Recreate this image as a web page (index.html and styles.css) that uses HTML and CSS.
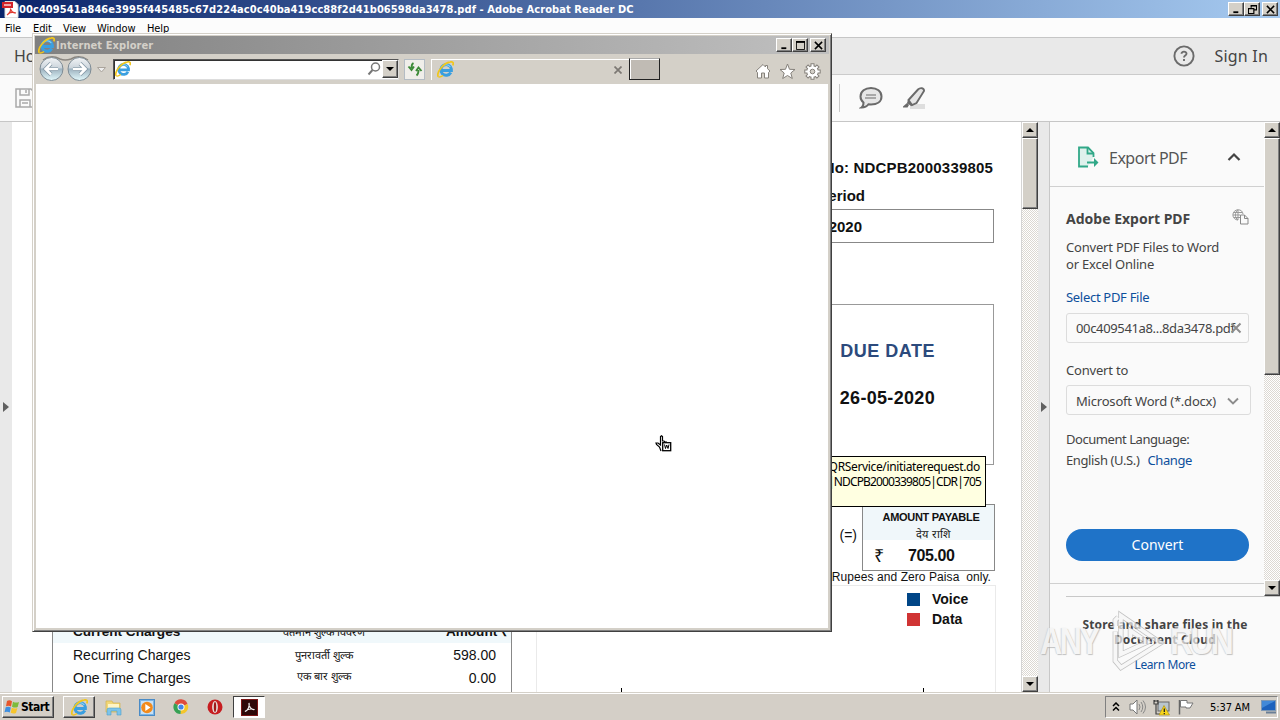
FILE: index.html
```html
<!DOCTYPE html>
<html lang="en">
<head>
    <meta charset="UTF-8">
    <meta name="viewport" content="width=device-width, initial-scale=1.0">
    <title>Adobe Acrobat Reader DC</title>
    <link rel="stylesheet" href="styles.css">
</head>
<body>
    <svg class="defs">
        <symbol id="ie" viewBox="0 0 16 16">
            <path d="M13 10.8A5 5 0 1 1 13.500 7.500L13.500 8.900H4.600" fill="none" stroke="#3a9fe0" stroke-width="2.800"/>
            <path d="M12.600 5.600A5.200 5.200 0 0 0 4 6" fill="none" stroke="#8fd3f6" stroke-width="1"/>
            <path d="M1.200 14.800C-1 11 6 2 12.500 .9C15.500 .3 15.700 2.300 14.800 4.200" fill="none" stroke="#f1c61c" stroke-width="1.600"/>
            <path d="M1.200 14.800C2.500 15.600 4.500 14.500 5.700 13.600" fill="none" stroke="#f1c61c" stroke-width="1.300"/>
        </symbol>
        <symbol id="min" viewBox="0 0 10 10"><path d="M1.500 8H7" stroke="#000" stroke-width="2"/></symbol>
        <symbol id="max" viewBox="0 0 10 10"><path d="M.5 1H9.500M.5 0V9.500H9.500V0" fill="none" stroke="#000"/><path d="M0 1H10" stroke="#000" stroke-width="2"/></symbol>
        <symbol id="restore" viewBox="0 0 10 10"><path d="M3.500 3V.5H9.500V5.500H7M3 1H10M.5 4V9.500H6.500V4M0 4H7" fill="none" stroke="#000" stroke-width="1.300"/></symbol>
        <symbol id="close" viewBox="0 0 10 10"><path d="M1 1L9 9M9 1L1 9" stroke="#000" stroke-width="1.700"/></symbol>
    </svg>

    <div class="titlebar">
        <svg class="pdf-icon" width="17" height="17" viewBox="0 0 17 17">
            <path d="M3 .5H13L16 3.500V16.500H3Z" fill="#fff" stroke="#ddd"/>
            <rect x="0" y="1" width="11" height="6" fill="#d3222a"/>
            <path d="M2 4H9" stroke="#fff" stroke-width="1.200"/>
            <path d="M5 14C8 12 9 10 8.500 7.500M8.500 8C9.500 11 11 12 14 12M6 13C8 11.500 11 11 14 12" fill="none" stroke="#e0392f" stroke-width="1.200"/>
        </svg>
        <span class="title-text">00c409541a846e3995f445485c67d224ac0c40ba419cc88f2d41b06598da3478.pdf - Adobe Acrobat Reader DC</span>
        <div class="win-buttons">
            <span class="wb"><svg><use href="#min"/></svg></span>
            <span class="wb"><svg><use href="#restore"/></svg></span>
            <span class="wb last"><svg><use href="#close"/></svg></span>
        </div>
    </div>
    <div class="menubar">
        <span class="m-file">File</span><span class="m-edit">Edit</span><span class="m-view">View</span><span class="m-window">Window</span><span>Help</span>
    </div>
    <div class="header">
        <span class="home">Home</span>
        <svg width="22" height="22" viewBox="0 0 22 22">
            <circle cx="11" cy="11" r="9.600" fill="none" stroke="#6b6b6b" stroke-width="1.900"/>
            <path d="M8.500 8.800C8.500 5.800 13.600 6 13.500 8.800C13.400 10.700 11 10.500 11 12.500M11 14V16" fill="none" stroke="#6b6b6b" stroke-width="1.900"/>
        </svg>
        <span class="signin">Sign In</span>
    </div>
    <div class="toolbar">
        <svg class="save" width="20" height="20" viewBox="0 0 20 20">
            <path d="M1 1H16L19 4V19H1Z M5 1V7H14V1 M11 2V5 M5 19V12H15V19 M7 15H13" fill="none" stroke="#a9a9a9" stroke-width="1.500"/>
        </svg>
        <span class="sep"></span>
        <svg class="comment" width="24" height="22" viewBox="0 0 24 22">
            <path d="M12 1C18 1 22.500 4.300 22.500 9.500S18 17.500 12 17.500L9.500 17.300C8 19.500 5 20.500 2.500 20.500C4 19.500 4.500 17.500 4.500 15.500C2.500 14 1.500 12 1.500 9.500C1.500 4.300 6 1 12 1Z" fill="#e6e6e6" stroke="#6a6a6a" stroke-width="2"/>
            <path d="M7 8H17M6 11H17" stroke="#6a6a6a" stroke-width="1.200"/>
        </svg>
        <svg width="24" height="22" viewBox="0 0 24 22">
            <rect x="8" y="17" width="15" height="5" fill="#dedede"/>
            <path d="M6.500 13L16 2.500C18 .5 22.500 .5 22 4L14.500 16L10 18Z" fill="#e6e6e6" stroke="#6a6a6a" stroke-width="1.900"/>
            <path d="M6 13L11 18L9 19L5 16ZM1 19.500L5 16L7 18L5.500 20.500H1Z" fill="#6a6a6a"/>
        </svg>
    </div>

    <div class="main">
        <div class="nav-strip"><span class="arrow"></span></div>
        <div class="document">
            <div class="bill-no">Bill No: NDCPB2000339805</div>
            <div class="period">Billing Period</div>
            <div class="period-box">2020</div>
            <div class="due-box">
                <div class="due-label">DUE DATE</div>
                <div class="due-date">26-05-2020</div>
            </div>
            <div class="payable-row">
                <span class="equals">(=)</span>
                <div class="payable">
                    <div class="payable-head">
                        <div class="payable-title">AMOUNT PAYABLE</div>
                        <div class="hindi">देय राशि</div>
                    </div>
                    <div class="payable-value"><span class="rupee">₹</span><span>705.00</span></div>
                </div>
            </div>
            <div class="words">Rupees and Zero Paisa &nbsp;only.</div>
            <div class="bottom-row">
                <div class="charges">
                    <div class="charge charge-head"><span>Current Charges</span><span class="hindi">वर्तमान शुल्क विवरण</span><span class="amount">Amount ₹</span></div>
                    <div class="charge"><span>Recurring Charges</span><span class="hindi">पुनरावर्ती शुल्क</span><span class="amount">598.00</span></div>
                    <div class="charge"><span>One Time Charges</span><span class="hindi up">एक बार शुल्क</span><span class="amount">0.00</span></div>
                </div>
                <div class="chart">
                    <div class="legend"><span class="swatch voice"></span>Voice</div>
                    <div class="legend"><span class="swatch data"></span>Data</div>
                    <div class="ticks"><span></span><span></span></div>
                </div>
            </div>
        </div>
        <div class="scrollbar">
            <span class="sb-btn"><i class="up-arrow"></i></span>
            <span class="thumb doc-thumb"></span>
            <span class="sb-btn sb-end"><i class="down-arrow"></i></span>
        </div>
        <div class="splitter"><span class="arrow"></span></div>
        <div class="side">
            <div class="side-top">
                <div class="panel">
                    <div class="panel-head">
                        <svg width="22" height="22" viewBox="0 0 22 22">
                            <path d="M11 20.500H2V1.500H11L16.500 7V11" fill="#dff1ec" stroke="#31a888" stroke-width="1.800"/>
                            <path d="M10.500 1.500V7.500H16.500" fill="none" stroke="#31a888" stroke-width="1.800"/>
                            <path d="M10 15.500H17V12L21.500 16.500L17 21V17.500H10Z" fill="#31a888"/>
                        </svg>
                        <span>Export PDF</span>
                        <svg class="chev" width="14" height="10" viewBox="0 0 14 10"><path d="M1.500 8L7 2.500L12.500 8" fill="none" stroke="#444" stroke-width="2.200"/></svg>
                    </div>
                    <div class="panel-body">
                        <div class="panel-title">
                            <span>Adobe Export PDF</span>
                            <svg width="17" height="16" viewBox="0 0 17 16">
                                <path d="M6 .8A5 5 0 1 0 6 11M6 .8A5 5 0 0 1 11 5M6 .8V11M1 6H8M1.500 3.500H10M2 8.500H8M6 .8C2.500 3 2.500 9 6 11" fill="none" stroke="#999"/>
                                <path d="M8.500 6H12.500L16 9.500V15H8.500ZM12.500 6V9.500H16" fill="#fafafa" stroke="#888"/>
                            </svg>
                        </div>
                        <div class="desc">Convert PDF Files to Word<br>or Excel Online</div>
                        <div class="link select-file">Select PDF File</div>
                        <div class="field file"><span>00c409541a8...8da3478.pdf</span>
                            <svg width="12" height="12" viewBox="0 0 12 12"><path d="M1.500 1.500L10.500 10.500M10.500 1.500L1.500 10.500" stroke="#8c8c8c" stroke-width="2"/></svg>
                        </div>
                        <div class="convert-to">Convert to</div>
                        <div class="field format"><span>Microsoft Word (*.docx)</span>
                            <svg width="12" height="8" viewBox="0 0 12 8"><path d="M1 1.500L6 6.500L11 1.500" fill="none" stroke="#8c8c8c" stroke-width="1.900"/></svg>
                        </div>
                        <div class="doc-lang">Document Language:</div>
                        <div class="lang"><span>English (U.S.)</span><span class="link change">Change</span></div>
                        <div class="convert-btn">Convert</div>
                    </div>
                    <div class="panel-end"></div>
                </div>
                <div class="scrollbar side-bar">
                    <span class="sb-btn"><i class="up-arrow"></i></span>
                    <span class="thumb side-thumb"></span>
                    <span class="sb-btn sb-end"><i class="down-arrow"></i></span>
                </div>
            </div>
            <div class="cloud">
                <div class="store">Store and share files in the<br>Document Cloud</div>
                <div class="link learn">Learn More</div>
            </div>
        </div>
    </div>

    <div class="taskbar">
        <div class="start">
            <svg width="16" height="16" viewBox="0 0 16 16">
                <path d="M3 2Q5.500 .5 8 2.300L7 7.500Q4.500 6 2 7.300Z" fill="#e8562a"/>
                <path d="M9 2.700Q12 4.300 15 3L13.700 8Q11 9.300 8 7.700Z" fill="#7dbb3c"/>
                <path d="M1.700 8.300Q4.300 7 6.800 8.500L5.800 13.500Q3 12 .5 13.300Z" fill="#3f8fe0"/>
                <path d="M7.800 8.800Q10.500 10.300 13.400 9L12 14Q9.500 15.300 6.700 13.800Z" fill="#f7c52c"/>
            </svg>
            <span>Start</span>
        </div>
        <div class="task raised"><svg width="17" height="17"><use href="#ie"/></svg></div>
        <div class="task">
            <svg width="17" height="17" viewBox="0 0 17 17">
                <path d="M1 2H7L8 4H15V13H1Z" fill="#f1d778" stroke="#d3b24d" stroke-width=".7"/>
                <path d="M3 5H14V9H3Z" fill="#fff5c5"/>
                <path d="M2 16V11Q2 9 4 9H14Q16 9 16 11V16H12V12H6V16Z" fill="#7cc4ea" stroke="#4d9fca" stroke-width=".6"/>
            </svg>
        </div>
        <div class="task">
            <svg width="17" height="17" viewBox="0 0 17 17">
                <rect x=".5" y=".5" width="15" height="16" fill="#79b4e6" stroke="#4a8bc6"/>
                <rect x="2" y="2" width="12" height="13" fill="#c9e1f4"/>
                <circle cx="8" cy="8.500" r="5.800" fill="#f28a1b"/><path d="M6.300 5L11.500 8.500L6.300 12Z" fill="#fff"/>
            </svg>
        </div>
        <div class="task">
            <svg width="16" height="16" viewBox="0 0 16 16">
                <path d="M8 8L1.500 4.300A7 7 0 0 1 14.500 5Z" fill="#de4b3c"/>
                <path d="M8 8L14.500 5A7 7 0 0 1 7.500 15Z" fill="#f4c62b"/>
                <path d="M8 8L7.500 15A7 7 0 0 1 1.500 4.300Z" fill="#36a154"/>
                <circle cx="8" cy="8" r="3.500" fill="#fff"/><circle cx="8" cy="8" r="2.600" fill="#4285e8"/>
            </svg>
        </div>
        <div class="task">
            <svg width="16" height="16" viewBox="0 0 16 16"><circle cx="8" cy="8" r="7.500" fill="#c71d20"/><ellipse cx="8" cy="8" rx="2.900" ry="5.900" fill="#e6dcd8"/><ellipse cx="8" cy="8" rx="1.200" ry="5" fill="#a01818"/></svg>
        </div>
        <div class="task pressed">
            <svg width="17" height="17" viewBox="0 0 17 17"><rect width="17" height="17" fill="#2e0808"/><rect x=".5" y=".5" width="16" height="16" fill="none" stroke="#7b1515"/><path d="M4 12.500C7 11.500 9 7 8 4C7.500 7 10 11 13.500 10.500C10 9.500 6 10.500 4 12.500Z" fill="none" stroke="#eee" stroke-width="1.200"/></svg>
        </div>
        <div class="tray">
            <svg width="8" height="10" viewBox="0 0 8 10"><path d="M1 4L4 1L7 4M1 8.500L4 5.500L7 8.500" fill="none" stroke="#000" stroke-width="1.500"/></svg>
            <svg class="speaker" width="18" height="16" viewBox="0 0 18 16"><path d="M1 5H4L8 1V15L4 11H1Z" fill="#fff" stroke="#777"/><path d="M10 5Q12 8 10 11M12 3Q15.500 8 12 13M14 1.500Q19 8 14 14.500" fill="none" stroke="#888"/></svg>
            <svg class="net" width="17" height="17" viewBox="0 0 17 17"><rect x="5" y="3" width="11" height="9" fill="#b9c5ce" stroke="#666"/><path d="M1 1V5H5V1M3 5V15H8M2 1V3M4 1V3" fill="none" stroke="#444" stroke-width="1.200"/><path d="M11 6.500L16.500 16H6Z" fill="#f8d51a" stroke="#a68a0c" stroke-width=".6"/><path d="M11.300 9.500V13M11.300 14V15.200" stroke="#222" stroke-width="1.300"/></svg>
            <svg class="flag" width="16" height="16" viewBox="0 0 16 16"><path d="M1.500 1V15.500" stroke="#666" stroke-width="1.500"/><path d="M2.500 1.500H9V4H15L12 9H8V8H2.500Z" fill="#fff" stroke="#777"/></svg>
            <span class="clock">5:37 AM</span>
            <svg width="16" height="14" viewBox="0 0 16 14"><rect x=".5" y=".5" width="14" height="10" fill="#1d62bd" stroke="#7d98b5"/><path d="M1 1H14L1 8Z" fill="#4289d8"/><path d="M5 12.500H15" stroke="#6a7f96" stroke-width="2"/></svg>
        </div>
    </div>

    <div class="tooltip">
        <div class="tip-url">QRService/initiaterequest.do</div>
        <div class="tip-ref">|NDCPB2000339805|CDR|705</div>
    </div>

    <div class="ie-window">
        <div class="ie-title">
            <svg width="17" height="17"><use href="#ie"/></svg>
            <span>Internet Explorer</span>
            <div class="win-buttons">
                <span class="wb"><svg><use href="#min"/></svg></span>
                <span class="wb"><svg><use href="#max"/></svg></span>
                <span class="wb last"><svg><use href="#close"/></svg></span>
            </div>
        </div>
        <div class="ie-bar">
            <svg class="nav" width="70" height="28" viewBox="0 0 70 28">
                <defs><linearGradient id="ball" x2="0" y2="1"><stop offset="0" stop-color="#f2f4f6"/><stop offset=".45" stop-color="#ccd5dc"/><stop offset=".5" stop-color="#9db2bf"/><stop offset="1" stop-color="#e4fafd"/></linearGradient></defs>
                <path d="M6 5Q14-1 23 4Q28 6 34 4Q42-1 51 5" fill="none" stroke="#8a8680" stroke-width="1.500"/>
                <circle cx="14.500" cy="14" r="11.500" fill="url(#ball)" stroke="#7e8b94"/>
                <circle cx="42.500" cy="14" r="11.500" fill="url(#ball)" stroke="#7e8b94"/>
                <path d="M21 14H9M14 8.500L8.500 14L14 19.500" fill="none" stroke="#8296a5" stroke-width="4"/>
                <path d="M21 14H9M14 8.500L8.500 14L14 19.500" fill="none" stroke="#fff" stroke-width="2.500"/>
                <path d="M36 14H48M43 8.500L48.500 14L43 19.500" fill="none" stroke="#8296a5" stroke-width="4"/>
                <path d="M36 14H48M43 8.500L48.500 14L43 19.500" fill="none" stroke="#fff" stroke-width="2.500"/>
                <path d="M60.500 12.500H68.500L64.500 17Z" fill="#eee" stroke="#aaa49c"/>
            </svg>
            <div class="address">
                <svg width="16" height="16"><use href="#ie"/></svg>
                <svg class="search" width="14" height="14" viewBox="0 0 14 14"><circle cx="8.500" cy="5" r="4" fill="none" stroke="#777" stroke-width="1.500"/><path d="M5.500 8L1.500 12.500" stroke="#777" stroke-width="2"/></svg>
                <span class="drop"><i class="down-arrow"></i></span>
            </div>
            <div class="refresh">
                <svg width="16" height="16" viewBox="0 0 16 16"><path d="M6.500 2Q4.500 3 4.500 7M1.500 5.500L4.500 9L7 5.500M9.500 14.500Q11.500 13 11.500 9M9 10L11.500 6.500L14.500 10" fill="none" stroke="#3c8a38" stroke-width="1.900"/></svg>
            </div>
            <div class="tab">
                <svg width="17" height="17"><use href="#ie"/></svg>
                <svg width="8" height="8" viewBox="0 0 8 8"><path d="M.5 .5L7.500 7.500M7.500 .5L.5 7.500" stroke="#7c7873" stroke-width="1.700"/></svg>
            </div>
            <div class="new-tab"></div>
            <div class="ie-tools">
                <svg width="16" height="16" viewBox="0 0 16 16"><path d="M1 8L8 1.500L10.500 4V2.500H12.500V5.700L15 8L13.500 9.500V15H9.500V10H6.500V15H2.500V9.500Z" fill="#fff" stroke="#85817b"/></svg>
                <svg width="17" height="17" viewBox="0 0 17 17"><path d="M8.500 1L10.500 6.300L16 6.500L11.800 10L13.300 15.500L8.500 12.500L3.700 15.500L5.200 10L1 6.500L6.500 6.300Z" fill="#fff" stroke="#85817b"/></svg>
                <svg width="17" height="17" viewBox="0 0 17 17">
                    <path d="M8.500 .3V16.700M.3 8.500H16.700M2.700 2.700L14.300 14.300M14.300 2.700L2.700 14.300" stroke="#85817b" stroke-width="4"/>
                    <circle cx="8.500" cy="8.500" r="6.300" fill="#85817b"/>
                    <path d="M8.500 1.300V15.700M1.300 8.500H15.700M3.400 3.400L13.600 13.600M13.600 3.400L3.400 13.600" stroke="#fff" stroke-width="2"/>
                    <circle cx="8.500" cy="8.500" r="5.300" fill="#fff"/>
                    <circle cx="8.500" cy="8.500" r="2.300" fill="#d4d0c8" stroke="#85817b"/>
                </svg>
            </div>
        </div>
        <div class="ie-page"></div>
    </div>

    <svg class="cursor" width="18" height="18" viewBox="0 0 18 18">
        <path d="M6 16L4.500 12L1.500 9.500L1 8H3L5.500 10V1.500L6.500 .8L7.500 1.500V6H9L10 7H12" fill="#fff" stroke="#000" stroke-width="1.200"/>
        <rect x="7.700" y="7.700" width="8" height="8" fill="#fff" stroke="#000" stroke-width="1.300"/>
        <path d="M9.500 9.500L10.500 13.500L11.700 10L13 13.500L14 9.500" fill="none" stroke="#000"/>
    </svg>

    <div class="watermark">
        <span>ANY</span>
        <svg width="70" height="66" viewBox="0 0 74 66"><path d="M14 16V10L17 7M14 22V53L20 60L62 34L20 5V46L48 33L30 21V28" fill="none" stroke="#aaa" stroke-width="5.500"/><path d="M14 16V10L17 7M14 22V53L20 60L62 34L20 5V46L48 33L30 21V28" fill="none" stroke="#f6f6f6" stroke-width="4"/></svg>
        <span class="run">RUN</span>
    </div>
</body>
</html>
```
FILE: styles.css
```css
* {
    box-sizing: border-box;
}
body {
    margin: 0;
    width: 1280px;
    height: 720px;
    overflow: hidden;
    display: flex;
    flex-direction: column;
    font-family: "Noto Sans", sans-serif;
    background: #fff;
    position: relative;
    white-space: nowrap;
}
svg {
    display: block;
    flex: none;
}
.defs {
    position: absolute;
    width: 0;
    height: 0;
}

/* window chrome */
.titlebar {
    height: 18px;
    flex: none;
    display: flex;
    align-items: center;
    padding: 0 2px;
    background: linear-gradient(90deg, #0a246a, #a6caf0);
    color: #fff;
}
.title-text {
    font: bold 11px "DejaVu Sans Condensed", "DejaVu Sans", sans-serif;
    letter-spacing: 0.08px;
}
.win-buttons {
    display: flex;
    margin-left: auto;
}
.wb {
    width: 16px;
    height: 14px;
    display: flex;
    align-items: center;
    justify-content: center;
    background: #d4d0c8;
    border: 1px solid;
    border-color: #fff #404040 #404040 #fff;
    box-shadow: inset -1px -1px #808080;
}
.wb svg {
    width: 9px;
    height: 9px;
}
.wb.last {
    margin-left: 2px;
}
.menubar {
    height: 19px;
    flex: none;
    display: flex;
    align-items: center;
    padding: 1px 0 0 5px;
    font: 11px "DejaVu Sans Condensed", "DejaVu Sans", sans-serif;
    letter-spacing: -0.1px;
    color: #000;
    background: #fcfcfc;
}
.m-file {
    width: 28px;
}
.m-edit {
    width: 30px;
}
.m-view {
    width: 34px;
}
.m-window {
    width: 50px;
}
.header {
    height: 38px;
    flex: none;
    display: flex;
    align-items: center;
    padding: 0 12px 0 14px;
    background: #e9e9e9;
    border-top: 1px solid #c6c6c6;
    border-bottom: 1px solid #cbcbcb;
    font-size: 16px;
    color: #444;
}
.header svg {
    margin-left: auto;
}
.signin {
    margin-left: 19px;
    letter-spacing: 0.2px;
}
.toolbar {
    height: 47px;
    flex: none;
    display: flex;
    align-items: center;
    padding-left: 15px;
    background: #fafafa;
    border-bottom: 1px solid #c6c6c6;
}
.sep {
    width: 1px;
    height: 28px;
    margin-left: 804px;
    background: #c8c8c8;
}
.comment {
    margin: 0 19px;
}

/* main area */
.main {
    height: 570px;
    flex: none;
    display: flex;
}
.nav-strip,
.splitter {
    width: 12px;
    display: flex;
    align-items: center;
    padding-left: 3px;
    background: #e9e9e9;
}
.splitter {
    border-right: 1px solid #c8c8c8;
}
.arrow {
    border: 5px solid transparent;
    border-left: 6px solid #606060;
    border-right: 0;
}
.document {
    width: 1009px;
    display: flex;
    flex-direction: column;
    overflow: hidden;
    font-family: "Liberation Sans", Arial, sans-serif;
    color: #111;
}
.bill-no {
    margin: 36px 28px 0 0;
    text-align: right;
    font-size: 15px;
    font-weight: bold;
    line-height: 20px;
    letter-spacing: 0.18px;
}
.period {
    margin: 8px 156px 0 0;
    text-align: right;
    font-size: 15px;
    font-weight: bold;
    line-height: 20px;
}
.period-box {
    width: 300px;
    height: 34px;
    margin: 3px 27px 0 auto;
    padding-right: 131px;
    border: 1px solid #888;
    text-align: right;
    font-size: 15px;
    font-weight: bold;
    line-height: 34px;
}
.due-box {
    width: 300px;
    height: 161px;
    margin: 61px 27px 0 auto;
    padding: 33px 58px 0 0;
    border: 1px solid #999;
    text-align: right;
    font-size: 18px;
    font-weight: bold;
    line-height: 27px;
}
.due-label {
    color: #2c4a7c;
    letter-spacing: 0.5px;
}
.due-date {
    margin-top: 20px;
    letter-spacing: 0.32px;
}
.payable-row {
    height: 67px;
    margin: 39px 26px 0 0;
    display: flex;
    justify-content: flex-end;
}
.equals {
    margin-right: 5px;
    font-size: 14px;
    line-height: 62px;
}
.payable {
    width: 133px;
    border: 1px solid #888;
}
.payable-head {
    height: 35px;
    padding: 5px 0 0 5px;
    background: #f0f7fa;
    text-align: center;
}
.payable-title {
    font-size: 11px;
    font-weight: bold;
    line-height: 15px;
    letter-spacing: -0.3px;
}
.hindi {
    font-size: 11px;
    line-height: 15px;
}
.payable-head .hindi {
    padding: 2px 0 0 4px;
}
.payable-value {
    display: flex;
    padding-left: 11px;
    font-size: 16px;
    font-weight: bold;
    line-height: 32px;
    letter-spacing: -0.4px;
}
.rupee {
    width: 34px;
    font-size: 18px;
    font-weight: normal;
}
.words {
    margin: 0 30px 0 0;
    text-align: right;
    font-size: 12px;
    line-height: 12px;
    letter-spacing: 0.07px;
}
.bottom-row {
    flex: 1;
    display: flex;
    align-items: stretch;
    margin-top: 2px;
    padding-left: 40px;
}
.charges {
    width: 460px;
    padding-top: 35px;
    border-left: 1px solid #888;
    border-right: 1px solid #888;
}
.charge {
    height: 23px;
    display: grid;
    grid-template-columns: 159px 184px 80px;
    padding-left: 20px;
    font-size: 14px;
    line-height: 25px;
}
.charge .hindi {
    text-align: center;
    line-height: 25px;
}
.charge .hindi.up {
    line-height: 21px;
}
.charge .amount {
    text-align: right;
}
.charge-head {
    background: #f0f8fb;
    font-weight: bold;
    font-size: 13.6px;
    line-height: 23px;
    grid-template-columns: 159px 184px 93px;
}
.charge-head .hindi {
    font-weight: normal;
}
.chart {
    width: 460px;
    margin-left: 24px;
    padding-top: 3px;
    border: 1px solid #eaeaea;
    border-bottom: 0;
    display: flex;
    flex-direction: column;
}
.legend {
    height: 20px;
    display: flex;
    align-items: center;
    padding-left: 370px;
    font-size: 14px;
    font-weight: bold;
}
.swatch {
    width: 13px;
    height: 13px;
    margin-right: 12px;
}
.voice {
    background: #004586;
}
.data {
    background: #d03434;
}
.ticks {
    margin-top: auto;
    padding: 0 71px 0 84px;
    display: flex;
    justify-content: space-between;
}
.ticks span {
    width: 1px;
    height: 4px;
    background: #000;
}

/* scrollbars */
.scrollbar {
    width: 17px;
    display: flex;
    flex-direction: column;
    background: repeating-conic-gradient(#fff 0 25%, #dcd8d2 0 50%) 0 0 / 2px 2px;
    border-left: 1px solid #d4d4d4;
}
.sb-btn,
.drop {
    width: 16px;
    height: 16px;
    display: flex;
    align-items: center;
    justify-content: center;
    background: #d4d0c8;
    border: 1px solid;
    border-color: #fff #404040 #404040 #fff;
    box-shadow: inset -1px -1px #808080;
}
.sb-end {
    margin-top: auto;
}
.thumb {
    background: #d4d0c8;
    border: 1px solid;
    border-color: #fff #404040 #404040 #fff;
    box-shadow: inset -1px -1px #808080;
}
.doc-thumb {
    height: 71px;
}
.side-thumb {
    height: 237px;
}
.up-arrow {
    border: 4px solid transparent;
    border-top: 0;
    border-bottom-color: #000;
}
.down-arrow {
    border: 4px solid transparent;
    border-bottom: 0;
    border-top-color: #000;
}

/* export panel */
.side {
    width: 230px;
    background: #fafafa;
    color: #444;
    font-size: 13px;
    letter-spacing: -0.2px;
}
.side-top {
    height: 474px;
    display: flex;
}
.panel {
    width: 214px;
}
.side-bar {
    width: 16px;
    border-left: 0;
}
.panel-head {
    height: 65px;
    display: flex;
    align-items: center;
    padding: 6px 23px 0 27px;
    border-bottom: 1px solid #d0d0d0;
    font-size: 16px;
    color: #555;
}
.panel-head span {
    margin-left: 10px;
    padding-top: 1px;
    letter-spacing: -0.7px;
    letter-spacing: -0.5px;
}
.chev {
    margin-left: auto;
}
.panel-body {
    padding: 22px 13px 0 16px;
}
.panel-title {
    height: 20px;
    display: flex;
    justify-content: space-between;
    padding-right: 2px;
    font-size: 14px;
    font-weight: bold;
    line-height: 20px;
    letter-spacing: 0;
}
.desc {
    margin-top: 10px;
    line-height: 17px;
}
.link {
    color: #0d4f9c;
}
.select-file {
    margin-top: 15px;
    line-height: 18px;
    letter-spacing: -0.3px;
}
.field {
    height: 30px;
    display: flex;
    align-items: center;
    justify-content: space-between;
    border: 1px solid #dcdcdc;
    border-radius: 3px;
    margin-top: 6px;
    padding: 0 11px 0 9px;
}
.file {
    width: 183px;
    margin-top: 7px;
    padding-right: 6px;
    letter-spacing: -0.35px;
}
.file svg {
    margin-left: -8px;
}
.format {
    width: 185px;
    padding-top: 2px;
}
.convert-to {
    margin-top: 18px;
    line-height: 18px;
}
.doc-lang {
    margin-top: 15px;
    line-height: 18px;
    letter-spacing: -0.45px;
}
.lang {
    margin-top: 3px;
    line-height: 18px;
    letter-spacing: -0.38px;
}
.change {
    margin-left: 8px;
}
.convert-btn {
    width: 183px;
    height: 32px;
    margin-top: 60px;
    border-radius: 16px;
    background: #1f73c8;
    color: #fff;
    font-size: 14px;
    line-height: 31px;
    text-align: center;
    letter-spacing: 0;
}
.panel-end {
    height: 13px;
    margin-top: 22px;
    border-top: 1px solid #d0d0d0;
}
.cloud {
    margin-left: 16px;
    padding: 20px 16px 0 0;
    border-top: 1px solid #c8c8c8;
    text-align: center;
}
.store {
    font-size: 12px;
    font-weight: bold;
    line-height: 15px;
    letter-spacing: 0.2px;
}
.learn {
    margin-top: 9px;
    font-size: 12px;
    line-height: 18px;
    letter-spacing: -0.4px;
}

/* taskbar */
.taskbar {
    height: 28px;
    flex: none;
    display: flex;
    align-items: center;
    padding: 1px 2px 0;
    background: #d4cfc7;
    border-top: 1px solid #d4d0c8;
    box-shadow: inset 0 1px #fff;
}
.start {
    width: 52px;
    height: 22px;
    display: flex;
    align-items: center;
    gap: 1px;
    padding-left: 1px;
    margin-right: 9px;
    border: 1px solid;
    border-color: #fff #404040 #404040 #fff;
    box-shadow: inset -1px -1px #808080;
    font: bold 12px "DejaVu Sans Condensed", "DejaVu Sans", sans-serif;
    letter-spacing: -0.5px;
}
.task {
    width: 32px;
    height: 22px;
    margin-right: 2px;
    display: flex;
    align-items: center;
    justify-content: center;
}
.raised {
    border: 1px solid;
    border-color: #fff #404040 #404040 #fff;
    box-shadow: inset -1px -1px #808080;
}
.pressed {
    background: #fff;
    border: 1px solid;
    border-color: #404040 #fff #fff #404040;
}
.tray {
    width: 173px;
    height: 22px;
    margin-left: auto;
    display: flex;
    align-items: center;
    padding-left: 6px;
    border: 1px solid;
    border-color: #808080 #fff #fff #808080;
    font: 11px "DejaVu Sans Condensed", "DejaVu Sans", sans-serif;
}
.speaker {
    margin-left: 9px;
}
.net {
    margin-left: 6px;
}
.flag {
    margin-left: 8px;
}
.clock {
    width: 51px;
    margin-left: 16px;
    letter-spacing: -0.1px;
}

/* link tooltip */
.tooltip {
    position: absolute;
    left: 780px;
    top: 456px;
    width: 206px;
    height: 51px;
    padding: 2px 4px 0 0;
    background: #ffffe1;
    border: 1px solid #000;
    font-size: 12px;
    line-height: 15px;
    color: #000;
    text-align: right;
}
.tip-url {
    padding-right: 1px;
    letter-spacing: -0.35px;
}
.tip-ref {
    letter-spacing: -0.85px;
}

/* browser window */
.ie-window {
    position: absolute;
    left: 32px;
    top: 33px;
    width: 800px;
    height: 599px;
    display: flex;
    flex-direction: column;
    padding: 2px;
    background: #d4d0c8;
    border: 1px solid;
    border-color: #d4d0c8 #404040 #404040 #d4d0c8;
    box-shadow: inset 1px 1px #fff, inset -1px -1px #808080;
}
.ie-title {
    height: 18px;
    flex: none;
    display: flex;
    align-items: center;
    padding: 0 3px;
    background: linear-gradient(90deg, #808080, #c0c0c0);
    color: #d4d0c8;
    font: bold 11px "DejaVu Sans Condensed", "DejaVu Sans", sans-serif;
    letter-spacing: 0.08px;
}
.ie-title span {
    margin-left: 1px;
}
.ie-title .wb {
    margin-left: 0;
}
.ie-title .wb.last {
    margin-left: 2px;
}
.ie-bar {
    height: 30px;
    flex: none;
    display: flex;
    align-items: center;
    padding-left: 2px;
}
.nav {
    margin-right: 6px;
}
.address {
    width: 286px;
    height: 21px;
    display: flex;
    align-items: center;
    padding-left: 1px;
    background: #fff;
    border: 1px solid;
    border-color: #555 #ddd #ddd #555;
    box-shadow: inset 1px 1px #333;
}
.search {
    margin-left: auto;
    margin-right: 1px;
}
.drop {
    height: 18px;
}
.refresh {
    width: 21px;
    height: 21px;
    margin-left: 5px;
    display: flex;
    align-items: center;
    justify-content: center;
    background: #f0eeea;
    border: 1px solid #b4bcc4;
}
.tab {
    width: 198px;
    height: 21px;
    margin-left: 6px;
    padding: 0 7px 0 5px;
    display: flex;
    align-items: center;
    justify-content: space-between;
    border-top: 1px solid #fff;
    border-left: 1px solid #fff;
}
.new-tab {
    width: 31px;
    height: 22px;
    background: #c0bbb4;
    border: 1px solid #222;
    border-top-color: #aaa;
    box-shadow: inset 1px 1px #fff;
}
.ie-tools {
    display: flex;
    gap: 8px;
    margin: 4px 8px 0 auto;
}
.ie-page {
    flex: 1;
    margin: 0 1px 1px;
    background: #fff;
}
.cursor {
    position: absolute;
    left: 655px;
    top: 435px;
}

/* translucent brand mark */
.watermark {
    position: absolute;
    left: 1040px;
    top: 609px;
    display: flex;
    align-items: center;
    opacity: 0.7;
    font: bold 37px "Liberation Sans", Arial, sans-serif;
    color: #f4f4f4;
    text-shadow: 1px 1px 1px #aaa, -1px 0 1px #ccc;
}
.watermark span {
    width: 61px;
    letter-spacing: -3px;
    transform: scaleX(0.83);
    transform-origin: left;
}
.watermark .run {
    margin-left: -2px;
    transform: scaleX(0.86);
}
.watermark svg {
    margin-left: 1px;
}
```
